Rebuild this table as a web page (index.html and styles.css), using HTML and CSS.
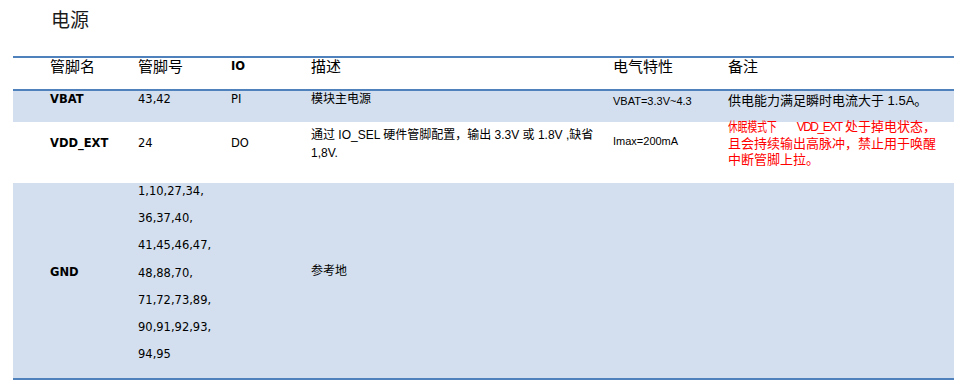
FILE: index.html
```html
<!DOCTYPE html>
<html lang="zh-CN">
<head>
<meta charset="utf-8">
<title>电源</title>
<link rel="stylesheet" href="styles.css">
</head>
<body>
<div class="title">电源</div>
<div class="tbl">
  <div class="row head">
    <div class="cjk">管脚名</div>
    <div class="cjk">管脚号</div>
    <div class="io">IO</div>
    <div class="cjk">描述</div>
    <div class="cjk">电气特性</div>
    <div class="cjk">备注</div>
  </div>
  <div class="row shade r1">
    <div class="name">VBAT</div>
    <div class="num">43,42</div>
    <div class="num">PI</div>
    <div class="desc1">模块主电源</div>
    <div class="elec e1">VBAT=3.3V~4.3</div>
    <div class="note1">供电能力满足瞬时电流大于 1.5A。</div>
  </div>
  <div class="row r2">
    <div class="name mid2">VDD_EXT</div>
    <div class="num mid2">24</div>
    <div class="num mid2">DO</div>
    <div class="desc2">通过 IO_SEL 硬件管脚配置，输出 3.3V 或 1.8V ,缺省<br>1,8V.</div>
    <div class="elec e2">Imax=200mA</div>
    <div class="warn"><span class="cond">休眠模式下</span> <span class="sig">VDD_EXT</span> 处于掉电状态，<br>且会持续输出高脉冲，禁止用于唤醒<br>中断管脚上拉。</div>
  </div>
  <div class="row shade r3">
    <div class="name mid3">GND</div>
    <div class="pins">1,10,27,34,<br>36,37,40,<br>41,45,46,47,<br>48,88,70,<br>71,72,73,89,<br>90,91,92,93,<br>94,95</div>
    <div></div>
    <div class="desc3">参考地</div>
    <div></div>
    <div></div>
  </div>
</div>
</body>
</html>
```

FILE: styles.css
```css
body {
  margin: 0;
  background: #ffffff;
  color: #000000;
  font-family: "Liberation Sans", "Noto Sans CJK SC", sans-serif;
}

.title {
  height: 56px;
  box-sizing: border-box;
  padding: 7px 0 0 51px;
  font-family: "Noto Sans CJK SC", serif;
  font-size: 19px;
  line-height: 24px;
  color: #1a1a1a;
}

.tbl {
  margin-left: 13px;
  width: 941px;
  border-top: 2px solid #4f81bd;
  border-bottom: 2px solid #4f81bd;
}

.row {
  display: grid;
  grid-template-columns: 88px 93px 80px 302px 115px 1fr;
  padding-left: 37px;
  box-sizing: border-box;
}

.shade {
  background: #d3dfee;
}

.head {
  height: 33px;
  border-bottom: 2px solid #4f81bd;
  font-size: 15px;
  line-height: 16px;
}

.head .cjk {
  font-family: "Noto Sans CJK SC", sans-serif;
}

.head .io {
  font-family: "DejaVu Sans", sans-serif;
  font-weight: bold;
  font-size: 11.5px;
}

.r1 { height: 31px; }
.r2 { height: 61px; }
.r3 { height: 195px; }

.name {
  font-family: "DejaVu Sans", sans-serif;
  font-weight: bold;
  font-size: 11.5px;
  line-height: 17px;
}

.num {
  font-family: "DejaVu Sans", sans-serif;
  font-size: 11.5px;
  line-height: 17px;
}

.desc1 {
  font-size: 12px;
  line-height: 17px;
}

.elec {
  font-size: 11px;
  line-height: 17px;
}

.e1 { padding-top: 2px; }
.e2 { padding-top: 11px; }

.note1 {
  font-size: 13px;
  line-height: 17px;
  padding-top: 1px;
}

.mid2 { padding-top: 13px; }

.desc2 {
  font-size: 12px;
  line-height: 18px;
  padding-top: 4px;
}

.warn {
  color: #ff0000;
  font-size: 13px;
  line-height: 16.5px;
  margin-top: -3px;
  white-space: nowrap;
}

.cond {
  display: inline-block;
  transform: scaleX(0.75);
  transform-origin: 0 50%;
}

.sig {
  font-size: 12px;
  letter-spacing: -1.5px;
}

.pins {
  font-family: "DejaVu Sans", sans-serif;
  font-size: 11.5px;
  line-height: 27.2px;
  margin-top: -5px;
}

.mid3 { padding-top: 81px; }

.desc3 {
  font-size: 12px;
  line-height: 17px;
  padding-top: 80px;
}
```
